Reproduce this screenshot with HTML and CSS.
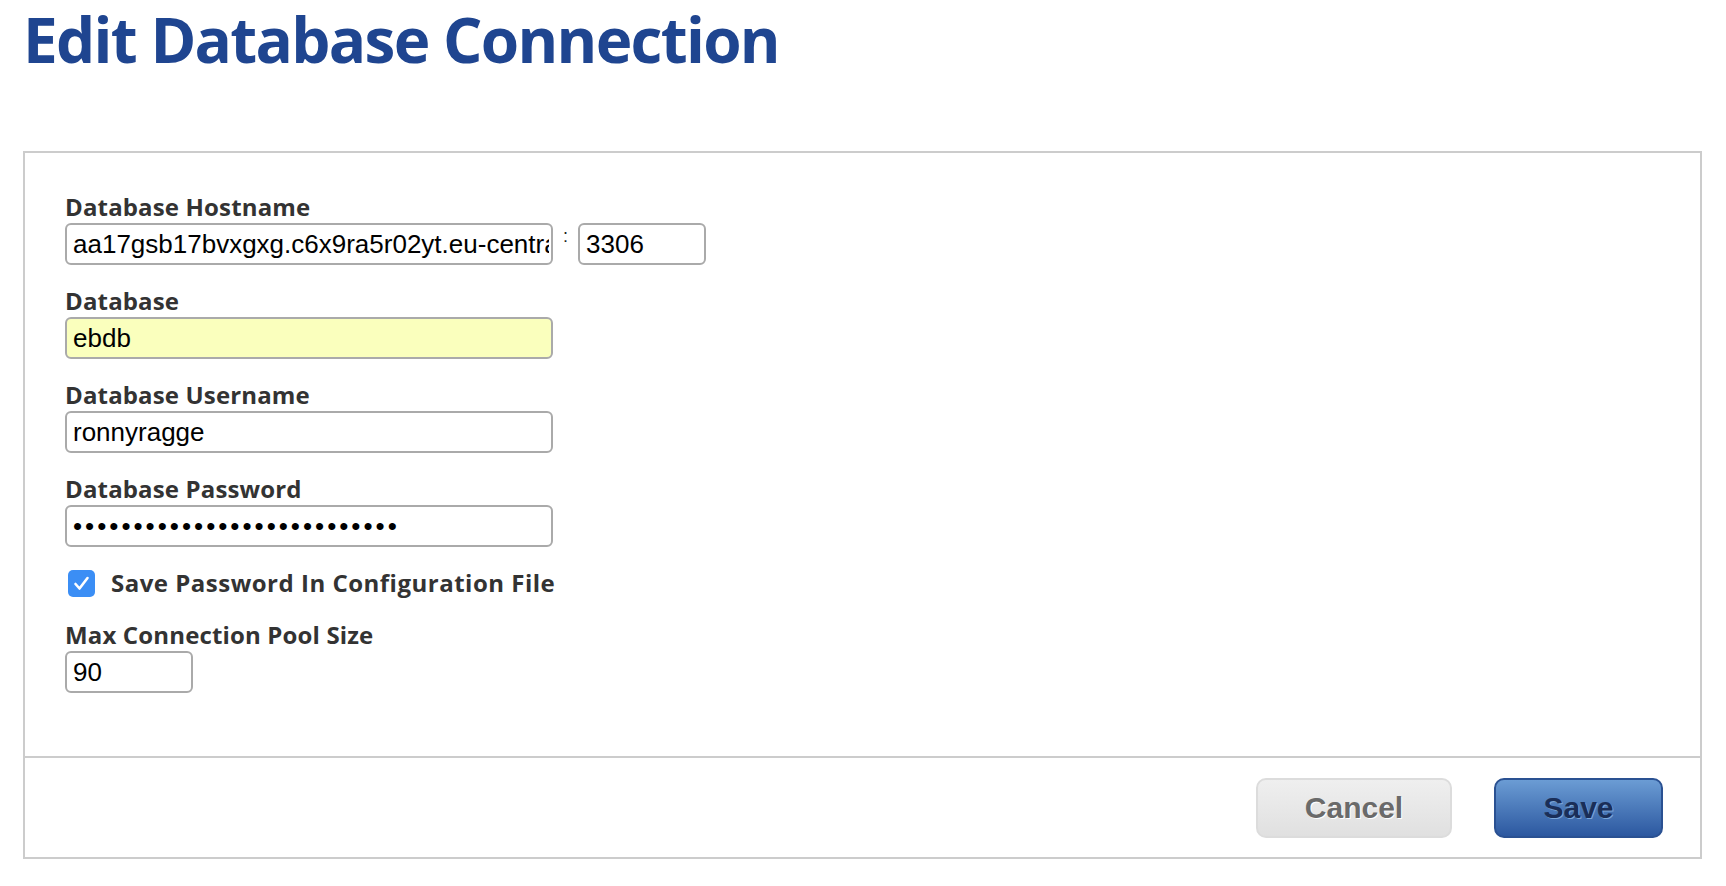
FILE: index.html
```html
<!DOCTYPE html>
<html lang="en">
<head>
<meta charset="utf-8">
<title>Edit Database Connection</title>
<link rel="stylesheet" href="styles.css">
</head>
<body>
<h1 class="page-title">Edit Database Connection</h1>
<form class="panel">
  <div class="panel-body">
    <div class="field">
      <label class="field-label" for="host">Database Hostname</label>
      <div class="host-row">
        <input class="input input-wide" id="host" type="text" value="aa17gsb17bvxgxg.c6x9ra5r02yt.eu-central-1.rds.amazonaws.com">
        <span class="colon">:</span>
        <input class="input input-short" type="text" value="3306">
      </div>
    </div>
    <div class="field">
      <label class="field-label" for="db">Database</label>
      <input class="input input-wide input-autofill" id="db" type="text" value="ebdb">
    </div>
    <div class="field">
      <label class="field-label" for="user">Database Username</label>
      <input class="input input-wide" id="user" type="text" value="ronnyragge">
    </div>
    <div class="field">
      <label class="field-label" for="pass">Database Password</label>
      <input class="input input-wide input-password" id="pass" type="password" value="abcdefghijklmnopqrstuvwxyz1">
    </div>
    <label class="check-row">
      <span class="checkbox">
        <svg width="27" height="27" viewBox="0 0 27 27"><polyline points="7.5,14 11.5,18.5 19.5,8" fill="none" stroke="#fff" stroke-width="2.6" stroke-linecap="round" stroke-linejoin="round"/></svg>
      </span>
      <span class="check-label">Save Password In Configuration File</span>
    </label>
    <div class="field field-last">
      <label class="field-label" for="pool">Max Connection Pool Size</label>
      <input class="input input-short" id="pool" type="text" value="90">
    </div>
  </div>
  <div class="panel-footer">
    <button type="button" class="btn btn-cancel">Cancel</button>
    <button type="button" class="btn btn-save">Save</button>
  </div>
</form>
</body>
</html>
```
FILE: styles.css
```css
body {
  margin: 0;
  padding: 0 24px 0 23px;
  background: #fff;
  font-family: "Open Sans", "Liberation Sans", sans-serif;
}

.page-title {
  margin: 8px 0 81px;
  font-size: 62px;
  line-height: 62px;
  font-weight: 700;
  color: #1f4590;
  letter-spacing: -1.7px;
}

.panel {
  margin: 0;
  border: 2px solid #cccccc;
}

.panel-body {
  padding: 40px 37px 63px 40px;
}

.field {
  margin-bottom: 22px;
}

.field-last {
  margin-bottom: 0;
}

.field-label {
  display: block;
  font-size: 24px;
  line-height: 28px;
  font-weight: 700;
  color: #333;
  letter-spacing: 0.15px;
  margin-bottom: 2px;
}

.input {
  display: block;
  box-sizing: border-box;
  height: 42px;
  margin: 0;
  border: 2px solid #aaaaaa;
  border-radius: 6px;
  padding: 0 2px 0 6px;
  font-family: "Liberation Sans", Arial, sans-serif;
  font-size: 26px;
  color: #000;
  background: #fff;
  outline: none;
}

.input-wide {
  width: 488px;
}

.input-short {
  width: 128px;
}

.input-autofill {
  background: #faffbd;
}

.input-password {
  letter-spacing: 3px;
}

.host-row {
  display: flex;
  align-items: center;
}

.colon {
  align-self: flex-start;
  margin: 4px 10px 0;
  font-family: "Liberation Sans", Arial, sans-serif;
  font-size: 18px;
  line-height: 18px;
  color: #222;
}

.check-row {
  display: flex;
  align-items: center;
  height: 28px;
  margin-bottom: 24px;
}

.checkbox {
  display: block;
  width: 27px;
  height: 27px;
  margin-left: 3px;
  border-radius: 5px;
  background: #3b8ef5;
}

.checkbox svg {
  display: block;
}

.check-label {
  margin-left: 16px;
  font-size: 24px;
  line-height: 28px;
  font-weight: 700;
  color: #333;
  letter-spacing: 0.5px;
}

.panel-footer {
  display: flex;
  justify-content: flex-end;
  gap: 42px;
  border-top: 2px solid #cccccc;
  padding: 20px 37px 19px;
}

.btn {
  box-sizing: border-box;
  height: 60px;
  padding: 0;
  border-radius: 10px;
  font-family: "Liberation Sans", Arial, sans-serif;
  font-size: 30px;
  font-weight: 700;
  cursor: pointer;
}

.btn-cancel {
  width: 196px;
  border: 2px solid #dcdcdc;
  background: linear-gradient(#efefef, #e0e0e0);
  color: #6a6a6a;
  text-shadow: 1px 1px 0 #fff;
}

.btn-save {
  width: 169px;
  border: 2px solid #2a5192;
  background: linear-gradient(#6b9cd4, #2c58a0);
  color: #1a2e58;
  text-shadow: 1px 1px 0 #7aa6d9;
}
```
